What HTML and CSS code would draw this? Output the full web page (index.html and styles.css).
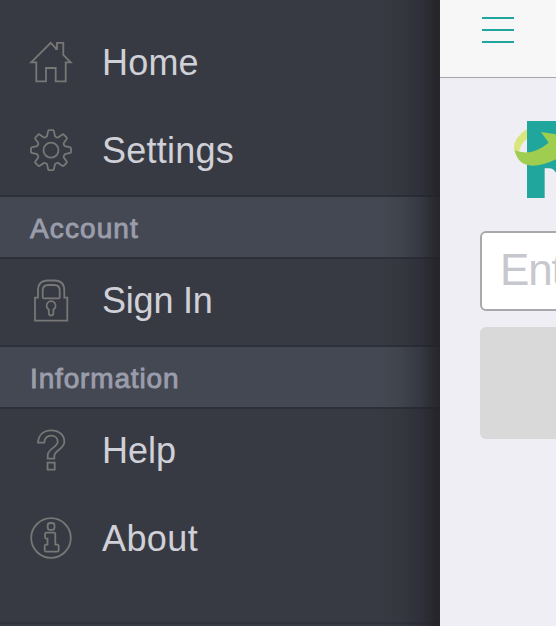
FILE: index.html
```html
<!DOCTYPE html>
<html lang="en">
<head>
<meta charset="utf-8">
<title>Menu</title>
<link rel="stylesheet" href="styles.css">
</head>
<body>
<div class="app">
  <nav class="drawer">
    <a class="item"><svg class="icon" viewBox="0 0 44 44"><path d="M21.7 1.9 27 7.4V8h1V1.8h6.3v12l7.4 7.5h-5v19h-10V27H17v13.3H7.3v-19H2.2Z"/></svg><span class="label home">Home</span></a>
    <a class="item"><svg class="icon" viewBox="-22 -21.2 44 44"><path d="M-4-14-2.8-19.3Q-2.6-20-1.8-20H1.8Q2.6-20 2.8-19.3L4-14Q5.5-12.2 7.1-12.7L11.5-15.8Q12.2-16.2 12.8-15.5L15.5-12.8Q16.2-12.2 15.8-11.5L12.7-7.1Q12.2-5.5 14-4L19.3-2.8Q20-2.6 20-1.8V1.8Q20 2.6 19.3 2.8L14 4Q12.2 5.5 12.7 7.1L15.8 11.5Q16.2 12.2 15.5 12.8L12.8 15.5Q12.2 16.2 11.5 15.8L7.1 12.7Q5.5 12.2 4 14L2.8 19.3Q2.6 20 1.8 20H-1.8Q-2.6 20-2.8 19.3L-4 14Q-5.5 12.2-7.1 12.7L-11.5 15.8Q-12.2 16.2-12.8 15.5L-15.5 12.8Q-16.2 12.2-15.8 11.5L-12.7 7.1Q-12.2 5.5-14 4L-19.3 2.8Q-20 2.6-20 1.8V-1.8Q-20-2.6-19.3-2.8L-14-4Q-12.2-5.5-12.7-7.1L-15.8-11.5Q-16.2-12.2-15.5-12.8L-12.8-15.5Q-12.2-16.2-11.5-15.8L-7.1-12.7Q-5.5-12.2-4-14Z"/><circle r="7.5"/></svg><span class="label settings">Settings</span></a>
    <h2 class="section account">Account</h2>
    <a class="item"><svg class="icon" viewBox="0 0 44 44"><path d="M6 18.7h3V11.5Q9 1.5 19 1.5h6.3q10 0 10 10v7.2h3v23H6Z"/><path d="M13.7 18.2v-6.7q0-5.5 5.5-5.5h6q5.5 0 5.5 5.5v6.7q0 1.2-1.2 1.2H14.9q-1.2 0-1.2-1.2Z"/><path d="M19.8 30.5a4.5 4.5 0 1 1 4.6 0v3.7q0 2.2-2.3 2.2t-2.3-2.2Z"/></svg><span class="label signin">Sign In</span></a>
    <h2 class="section information">Information</h2>
    <a class="item"><svg class="icon" viewBox="0 0 44 44"><path d="M9 13.7C9.5 6 14.5 1.3 22.3 1.3c7.8 0 13 4.7 13 11.5 0 7.3-10 8.8-10 14.2v2.7h-6.6v-3.5c0-6.4 10-8 10-13.4 0-3.8-2.6-6.1-6.4-6.1-4.2 0-6.7 2.6-7 7Z"/><path d="M18.5 33.7h7.2v7h-7.2Z"/></svg><span class="label help">Help</span></a>
    <a class="item"><svg class="icon" viewBox="0 0 44 44"><circle cx="22" cy="21" r="19.8"/><rect x="18.7" y="6" width="6.8" height="6.8" rx="2.4"/><path d="M17.5 15.7h7.4q1.4 0 1.4 1.4v10.6h1.9q1.5 0 1.5 1.5v4q0 1.5-1.5 1.5H17.2q-1.5 0-1.5-1.5v-4q0-1.5 1.5-1.5h1.3v-6h-1q-1.5 0-1.5-1.5v-3q0-1.5 1.5-1.5Z"/></svg><span class="label about">About</span></a>
    <div class="rule"></div>
  </nav>
  <main class="page">
    <header class="bar"><div class="burger"><i></i><i></i><i></i></div></header>
    <div class="content">
      <svg class="logo" viewBox="132 63 126 231">
        <path class="teal" d="M171 63h87v155q-8-13-21-13h-13v89h-53Z"/>
        <path class="lime" d="M171 87Q132 113 132 142q0 12 5 17h10q2-26 24-42Z"/>
        <path class="green" d="M213 96 258 103v75q-38 19-70 19-44 0-54-46 50 20 102-23Z"/>
      </svg>
      <div class="field">Enter</div>
      <div class="button"></div>
    </div>
  </main>
</div>
</body>
</html>
```
FILE: styles.css
```css
* { box-sizing: border-box; }
body { margin: 0; overflow: hidden; font-family: "Liberation Sans", Arial, sans-serif; }
.app { display: grid; grid-template-columns: 440px 116px; height: 626px; overflow: hidden; }
.drawer { position: relative; display: flex; flex-direction: column; padding-top: 19px; background: #383a43; }
.drawer::after {
  content: ""; position: absolute; top: 0; right: 0; bottom: 0; width: 60px;
  background: linear-gradient(90deg, rgba(32,34,38,0), rgba(32,34,38,.12) 35%, rgba(32,32,42,.4) 68%, rgba(34,34,37,.8) 92%, rgba(36,36,39,.9));
}
.item { display: flex; align-items: center; height: 88px; padding-left: 29px; }
.icon { width: 44px; height: 44px; margin-right: 29px; fill: none; stroke: #777776; stroke-width: 1.8; }
.label { font-size: 36px; line-height: 44px; color: #d0d0d8; white-space: nowrap; }
.home { letter-spacing: .2px; }
.settings { letter-spacing: .25px; }
.signin { letter-spacing: -.2px; }
.about { letter-spacing: .4px; }
.section {
  display: flex; align-items: center; height: 64px; margin: 0 0 -2px; padding: 3px 0 0 30px;
  border-top: 2px solid #2d2f3a; border-bottom: 2px solid #2d2f3a; background: #444852;
  font-size: 28px; font-weight: 400; letter-spacing: .85px; color: #9a9dab; -webkit-text-stroke: .9px #9a9dab;
}
.account { letter-spacing: 1.1px; }
.rule { height: 2px; margin-top: 39px; background: #32323f; }
.page { overflow: hidden; background: #efeef4; }
.bar { height: 78px; padding: 17px 0 0 42px; border-bottom: 1px solid #a7a7aa; background: #f7f7f7; }
.burger { display: grid; gap: 10px; width: 32px; }
.burger i { height: 2px; background: #21a69d; }
.content { display: flex; flex-direction: column; width: 300px; padding: 43px 0 0 40px; }
.logo { width: 42px; height: 77px; margin-left: 34px; }
.teal { fill: #20a69d; }
.lime { fill: #d9e57d; }
.green { fill: #9fcd50; }
.field {
  height: 80px; margin-top: 33px; padding-left: 18px; border: 2px solid #a9a9ac; border-radius: 6px;
  background: #fff; font-size: 44px; line-height: 73px; letter-spacing: -1.2px; color: #c7c7ce;
}
.button { height: 112px; margin-top: 16px; border-radius: 6px; background: #d9d9d9; }
```
